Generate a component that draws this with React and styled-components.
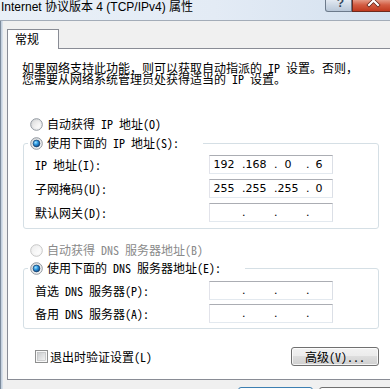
import React from "react";
import styled, { createGlobalStyle } from "styled-components";

const UI_FONT = `"Noto Sans Mono CJK SC", "Noto Sans CJK SC", monospace`;
const TITLE_FONT = `"Liberation Sans", "Noto Sans CJK SC", sans-serif`;
const IP_FONT = `"DejaVu Sans", "Liberation Sans", sans-serif`;

const GlobalStyle = createGlobalStyle`
  html, body { margin: 0; padding: 0; background: #f0f0f0; overflow: hidden; }
  body { width: 390px; height: 389px; }
  * { box-sizing: border-box; }
`;

const Window = styled.div`
  width: 390px;
  height: 389px;
  overflow: hidden;
  display: flex;
  flex-direction: column;
  background: #f0f0f0;
`;

const TitleBar = styled.div`
  flex: none;
  height: 21px;
  display: flex;
  align-items: flex-start;
  background: linear-gradient(90deg, #e9f0f8 0%, #e3ebf5 55%, #d4e1ef 100%);
  border-bottom: 1px solid #a3acb8;
`;

const Title = styled.div`
  padding-left: 1px;
  font: 12px/15px ${TITLE_FONT};
  color: #000;
  white-space: nowrap;
`;

const Caption = styled.div`
  margin-left: auto;
  margin-right: -5px;
  display: flex;
  flex: none;
`;

const CaptionButton = styled.div`
  flex: none;
  width: ${(p) => p.$w}px;
  height: 12px;
  overflow: hidden;
  display: flex;
  justify-content: center;
  border: 1px solid ${(p) => (p.$close ? "#6e2a1e" : "#6c7a8b")};
  border-top: none;
  border-radius: ${(p) => (p.$close ? "0 0 3px 0" : "0 0 0 3px")};
  background: ${(p) =>
    p.$close
      ? "linear-gradient(#e49a86, #d35c42 45%, #c03a1f)"
      : "linear-gradient(#e2e9f2, #ccd7e4 50%, #b9c7d8)"};
`;

const HelpGlyph = styled.span`
  display: block;
  padding-left: 4px;
  margin-top: -3px;
  font: bold 12px/12px ${TITLE_FONT};
  color: #34455a;
`;

const Client = styled.div`
  flex: 1;
  min-height: 0;
  display: flex;
`;

const FrameEdge = styled.div`
  flex: none;
  width: 3px;
  background: linear-gradient(90deg, #7d8b9c 0, #7d8b9c 1px, #bccada 1px, #dfe6ee 3px);
`;

const Content = styled.div`
  flex: 1;
  min-width: 0;
  padding: 8px 0 0 4px;
  display: flex;
  flex-direction: column;
`;

const TabStrip = styled.div`
  flex: none;
  height: 19px;
  display: flex;
`;

const Tab = styled.div`
  position: relative;
  z-index: 1;
  width: 52px;
  height: 20px;
  padding-left: 7px;
  border: 1px solid #898c95;
  border-bottom: none;
  background: #fff;
  font: 12px/18px ${UI_FONT};
  color: #000;
`;

const Panel = styled.div`
  flex: none;
  height: 332px;
  margin-right: -12px;
  border: 1px solid #898c95;
  background: #fff;
  padding: 13px 0 0 15px;
  display: flex;
  flex-direction: column;
  align-items: flex-start;
`;

const Intro = styled.p`
  margin: 0 0 0 -1px;
  font: 12px/11px ${UI_FONT};
  color: #000;
  white-space: nowrap;
`;

const Column = styled.div`
  width: 356px;
  display: flex;
  flex-direction: column;
`;

const RadioRow = styled.div`
  display: flex;
  align-items: center;
  gap: 4px;
  height: 14px;
  margin-left: 7px;
  margin-top: ${(p) => p.$top}px;
  font: 12px/14px ${UI_FONT};
  color: ${(p) => (p.$disabled ? "#8a8a8a" : "#000")};
  white-space: nowrap;
`;

const Group = styled.fieldset`
  margin: ${(p) => p.$top}px 0 0 0;
  min-width: 0;
  padding: ${(p) => p.$pt}px 11px ${(p) => p.$pb}px 11px;
  border: 1px solid #d5dfe5;
  border-radius: 3px;
`;

const Legend = styled.legend`
  margin-left: -7px;
  padding: 0 24px 0 2px;
  height: 14px;
  font: 12px/14px ${UI_FONT};
  color: #000;
`;

const LegendOption = styled.span`
  display: inline-flex;
  align-items: center;
  gap: 4px;
  height: 14px;
  white-space: nowrap;
`;

const Rows = styled.div`
  display: flex;
  flex-direction: column;
  gap: ${(p) => p.$gap}px;
`;

const FieldRow = styled.div`
  display: grid;
  grid-template-columns: 174px 124px;
  align-items: center;
  height: 19px;
`;

const FieldLabel = styled.span`
  font: 12px/14px ${UI_FONT};
  color: #000;
  white-space: nowrap;
`;

const IpBox = styled.div`
  width: 124px;
  height: 19px;
  background: #fff;
  border: 1px solid #e3e9ef;
  border-top-color: #abadb3;
  border-left-color: #e2e3ea;
  border-right-color: #dbdfe6;
  display: grid;
  grid-template-columns: 28px 32px 32px 30px;
  overflow: hidden;
  font: 11px/17px ${IP_FONT};
  color: #000;
`;

const Octet = styled.div`
  display: grid;
  align-items: center;
`;

const OctetDot = styled.span`
  grid-area: 1 / 1;
  justify-self: start;
  margin-left: 4px;
`;

const OctetNum = styled.span`
  grid-area: 1 / 1;
  justify-self: center;
  margin-left: ${(p) => (p.$first ? 0 : 4)}px;
`;

const BottomRow = styled.div`
  margin-top: 18px;
  height: 19px;
  display: flex;
  align-items: center;
  justify-content: space-between;
  padding-left: 12px;
`;

const CheckOption = styled.div`
  display: flex;
  align-items: center;
  gap: 2px;
  font: 12px/14px ${UI_FONT};
  color: #000;
  white-space: nowrap;
`;

const PushButton = styled.div`
  flex: none;
  width: ${(p) => p.$w}px;
  height: ${(p) => p.$h}px;
  display: flex;
  align-items: center;
  justify-content: center;
  border: 1px solid ${(p) => (p.$primary ? "#3c7fb1" : "#707070")};
  border-radius: 3px;
  background: linear-gradient(#f2f2f2 0%, #ebebeb 49%, #dddddd 50%, #cfcfcf 100%);
  box-shadow: inset 0 0 0 1px rgba(255, 255, 255, 0.75);
  font: 12px/14px ${UI_FONT};
  color: #000;
  white-space: nowrap;
`;

const Footer = styled.div`
  flex: none;
  margin-top: 7px;
  margin-right: -4px;
  display: flex;
  justify-content: flex-end;
  gap: 6px;
`;

function RadioIcon({ id, checked, disabled }) {
  const ring = disabled ? "#c6c6c6" : "#8f969e";
  return (
    <svg width="13" height="13" viewBox="0 0 13 13" style={{ flex: "none" }}>
      <defs>
        <linearGradient id={`${id}-bg`} x1="0" y1="0" x2="1" y2="1">
          <stop offset="0" stopColor={disabled ? "#ececec" : "#d2d4d6"} />
          <stop offset="1" stopColor="#fdfdfd" />
        </linearGradient>
        <linearGradient id={`${id}-in`} x1="0" y1="0" x2="1" y2="1">
          <stop offset="0" stopColor={disabled ? "#efefef" : "#e0e0e0"} />
          <stop offset="1" stopColor="#ffffff" />
        </linearGradient>
        <radialGradient id={`${id}-dot`} cx="0.38" cy="0.35" r="0.7">
          <stop offset="0" stopColor="#9fe3ff" />
          <stop offset="0.45" stopColor="#2c97e0" />
          <stop offset="1" stopColor="#0d3f78" />
        </radialGradient>
      </defs>
      <circle cx="6.5" cy="6.5" r="5.8" fill={`url(#${id}-bg)`} stroke={ring} strokeWidth="1" />
      {checked ? (
        <circle cx="6.5" cy="6.5" r="3.4" fill={`url(#${id}-dot)`} stroke="#173f6b" strokeWidth="0.7" />
      ) : (
        <circle cx="6.5" cy="6.5" r="3.6" fill={`url(#${id}-in)`} />
      )}
    </svg>
  );
}

function CheckIcon({ id }) {
  return (
    <svg width="13" height="13" viewBox="0 0 13 13" style={{ flex: "none" }}>
      <defs>
        <linearGradient id={id} x1="0" y1="0" x2="1" y2="1">
          <stop offset="0" stopColor="#c9cbcd" />
          <stop offset="1" stopColor="#f4f4f4" />
        </linearGradient>
      </defs>
      <rect x="0.5" y="0.5" width="12" height="12" fill="#f8f8f8" stroke="#8e8f8f" />
      <rect x="2.5" y="2.5" width="8" height="8" fill={`url(#${id})`} stroke="#b4b6b8" strokeWidth="0.6" />
    </svg>
  );
}

function CloseGlyph() {
  return (
    <svg width="41" height="12" viewBox="0 0 41 12">
      <path d="M16 -4 L25 5 M25 -4 L16 5" stroke="#5b1d12" strokeWidth="3.6" strokeLinecap="square" />
      <path d="M16 -4 L25 5 M25 -4 L16 5" stroke="#ffffff" strokeWidth="2.2" strokeLinecap="square" />
    </svg>
  );
}

function IpField({ value }) {
  const parts = value ? value.split(".") : ["", "", "", ""];
  return (
    <IpBox>
      {parts.map((p, i) => (
        <Octet key={i}>
          {i > 0 && <OctetDot>.</OctetDot>}
          <OctetNum $first={i === 0}>{p}</OctetNum>
        </Octet>
      ))}
    </IpBox>
  );
}

function Fields({ rows, gap }) {
  return (
    <Rows $gap={gap}>
      {rows.map((r) => (
        <FieldRow key={r.label}>
          <FieldLabel>{r.label}</FieldLabel>
          <IpField value={r.value} />
        </FieldRow>
      ))}
    </Rows>
  );
}

const ipRows = [
  { label: "IP 地址(I):", value: "192.168.0.6" },
  { label: "子网掩码(U):", value: "255.255.255.0" },
  { label: "默认网关(D):", value: "" },
];

const dnsRows = [
  { label: "首选 DNS 服务器(P):", value: "" },
  { label: "备用 DNS 服务器(A):", value: "" },
];

export default function App() {
  return (
    <>
      <GlobalStyle />
      <Window>
        <TitleBar>
          <Title>Internet 协议版本 4 (TCP/IPv4) 属性</Title>
          <Caption>
            <CaptionButton $w={27}>
              <HelpGlyph>?</HelpGlyph>
            </CaptionButton>
            <CaptionButton $w={43} $close>
              <CloseGlyph />
            </CaptionButton>
          </Caption>
        </TitleBar>
        <Client>
          <FrameEdge />
          <Content>
            <TabStrip>
              <Tab>常规</Tab>
            </TabStrip>
            <Panel>
              <Intro>
                如果网络支持此功能，则可以获取自动指派的 IP 设置。否则，
                <br />
                您需要从网络系统管理员处获得适当的 IP 设置。
              </Intro>
              <Column>
                <RadioRow $top={33}>
                  <RadioIcon id="r-ip-auto" />
                  自动获得 IP 地址(O)
                </RadioRow>
                <Group $top={5} $pt={5} $pb={6}>
                  <Legend>
                    <LegendOption>
                      <RadioIcon id="r-ip-manual" checked />
                      使用下面的 IP 地址(S):
                    </LegendOption>
                  </Legend>
                  <Fields rows={ipRows} gap={5} />
                </Group>
                <RadioRow $top={14} $disabled>
                  <RadioIcon id="r-dns-auto" disabled />
                  自动获得 DNS 服务器地址(B)
                </RadioRow>
                <Group $top={4} $pt={6} $pb={5}>
                  <Legend>
                    <LegendOption>
                      <RadioIcon id="r-dns-manual" checked />
                      使用下面的 DNS 服务器地址(E):
                    </LegendOption>
                  </Legend>
                  <Fields rows={dnsRows} gap={4} />
                </Group>
                <BottomRow>
                  <CheckOption>
                    <CheckIcon id="c-validate" />
                    退出时验证设置(L)
                  </CheckOption>
                  <PushButton $w={88} $h={19}>
                    高级(V)...
                  </PushButton>
                </BottomRow>
              </Column>
            </Panel>
            <Footer>
              <PushButton $w={75} $h={23} $primary aria-label="确定" />
              <PushButton $w={75} $h={23} aria-label="取消" />
            </Footer>
          </Content>
        </Client>
      </Window>
    </>
  );
}
